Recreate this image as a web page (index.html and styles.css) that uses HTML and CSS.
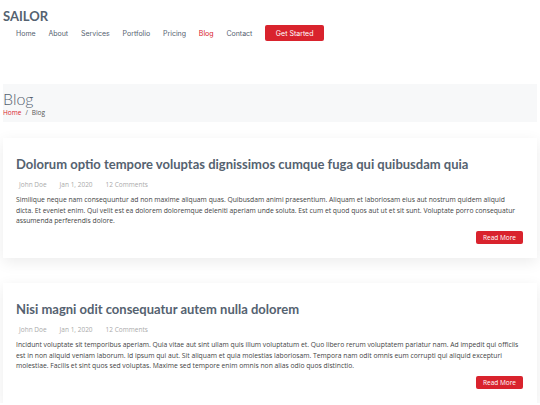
FILE: index.html
```html
<!DOCTYPE html>
<html lang="en">
<head>
<meta charset="utf-8">
<title>Blog - Sailor</title>
<link rel="stylesheet" href="styles.css">
</head>
<body>
<header class="header">
  <div class="logo">SAILOR</div>
  <nav class="nav">
    <a href="#">Home</a>
    <a href="#">About</a>
    <a href="#">Services</a>
    <a href="#">Portfolio</a>
    <a href="#">Pricing</a>
    <a href="#" class="active">Blog</a>
    <a href="#">Contact</a>
    <a href="#" class="cta">Get Started</a>
  </nav>
</header>
<main class="main">
  <section class="breadcrumbs">
    <h2>Blog</h2>
    <ol><li class="home">Home</li><li class="sep">/</li><li>Blog</li></ol>
  </section>
  <section class="posts">
    <article class="entry">
      <h2 class="entry-title">Dolorum optio tempore voluptas dignissimos cumque fuga qui quibusdam quia</h2>
      <ul class="meta"><li>John Doe</li><li>Jan 1, 2020</li><li>12 Comments</li></ul>
      <p class="content">Similique neque nam consequuntur ad non maxime aliquam quas. Quibusdam animi praesentium. Aliquam et laboriosam eius aut nostrum quidem aliquid dicta. Et eveniet enim. Qui velit est ea dolorem doloremque deleniti aperiam unde soluta. Est cum et quod quos aut ut et sit sunt. Voluptate porro consequatur assumenda perferendis dolore.</p>
      <div class="more"><a href="#">Read More</a></div>
    </article>
    <article class="entry">
      <h2 class="entry-title">Nisi magni odit consequatur autem nulla dolorem</h2>
      <ul class="meta"><li>John Doe</li><li>Jan 1, 2020</li><li>12 Comments</li></ul>
      <p class="content">Incidunt voluptate sit temporibus aperiam. Quia vitae aut sint ullam quis illum voluptatum et. Quo libero rerum voluptatem pariatur nam. Ad impedit qui officiis est in non aliquid veniam laborum. Id ipsum qui aut. Sit aliquam et quia molestias laboriosam. Tempora nam odit omnis eum corrupti qui aliquid excepturi molestiae. Facilis et sint quos sed voluptas. Maxime sed tempore enim omnis non alias odio quos distinctio.</p>
      <div class="more"><a href="#">Read More</a></div>
    </article>
  </section>
</main>
</body>
</html>
```
FILE: styles.css
```css
* { box-sizing: border-box; }
html, body { margin: 0; padding: 0; }
body {
  background: #fff;
  font-family: "Open Sans", sans-serif;
  color: #444;
  overflow: hidden;
}
a { text-decoration: none; }

.header {
  padding: 8px 3px 0;
  height: 84px;
}
.logo {
  font-family: "Lato", sans-serif;
  font-weight: 700;
  font-size: 13px;
  line-height: 16px;
  color: #556270;
}
.nav {
  display: flex;
  align-items: center;
  gap: 12.8px;
  padding-left: 13px;
  margin-top: 1px;
}
.nav a {
  font-family: "Inter", sans-serif;
  font-size: 7px;
  color: #556270;
}
.nav a.active { color: #d9232d; }
.nav a.cta {
  background: #d9232d;
  color: #fff;
  border-radius: 2px;
  width: 59px;
  height: 16px;
  display: flex;
  align-items: center;
  justify-content: center;
}

.main { padding: 0 3px; }
.breadcrumbs {
  background: #f7f8f9;
  height: 38px;
  padding: 6px 0 0;
}
.breadcrumbs h2 {
  margin: 0;
  font-family: "Lato", sans-serif;
  font-weight: 300;
  font-size: 16px;
  line-height: 18px;
  color: #556270;
}
.breadcrumbs ol {
  list-style: none;
  margin: 0;
  padding: 0;
  display: flex;
  gap: 4px;
  font-size: 6.5px;
  line-height: 9px;
  color: #555;
}
.breadcrumbs .home { color: #d9232d; }

.posts {
  display: flex;
  flex-direction: column;
  gap: 25px;
  padding-top: 16px;
}
.entry {
  height: 120px;
  padding: 18px 14px 0 13px;
  box-shadow: 0 4px 14px rgba(0,0,0,0.08);
}
.entry-title {
  margin: 0;
  font-family: "Lato", sans-serif;
  font-weight: 700;
  font-size: 13px;
  line-height: 16px;
  color: #556270;
}
.meta {
  list-style: none;
  margin: 8px 0 0;
  padding: 0 0 0 3px;
  display: flex;
  gap: 13px;
  font-size: 6.5px;
  line-height: 9px;
  color: #aaaaaa;
}
.content {
  margin: 6px 0 0;
  font-size: 6.78px;
  line-height: 10.5px;
  color: #444;
}
.more {
  display: flex;
  justify-content: flex-end;
  margin-top: 4px;
}
.more a {
  background: #d9232d;
  color: #fff;
  font-size: 6.5px;
  width: 47px;
  height: 13px;
  border-radius: 2px;
  display: flex;
  align-items: center;
  justify-content: center;
}
```
